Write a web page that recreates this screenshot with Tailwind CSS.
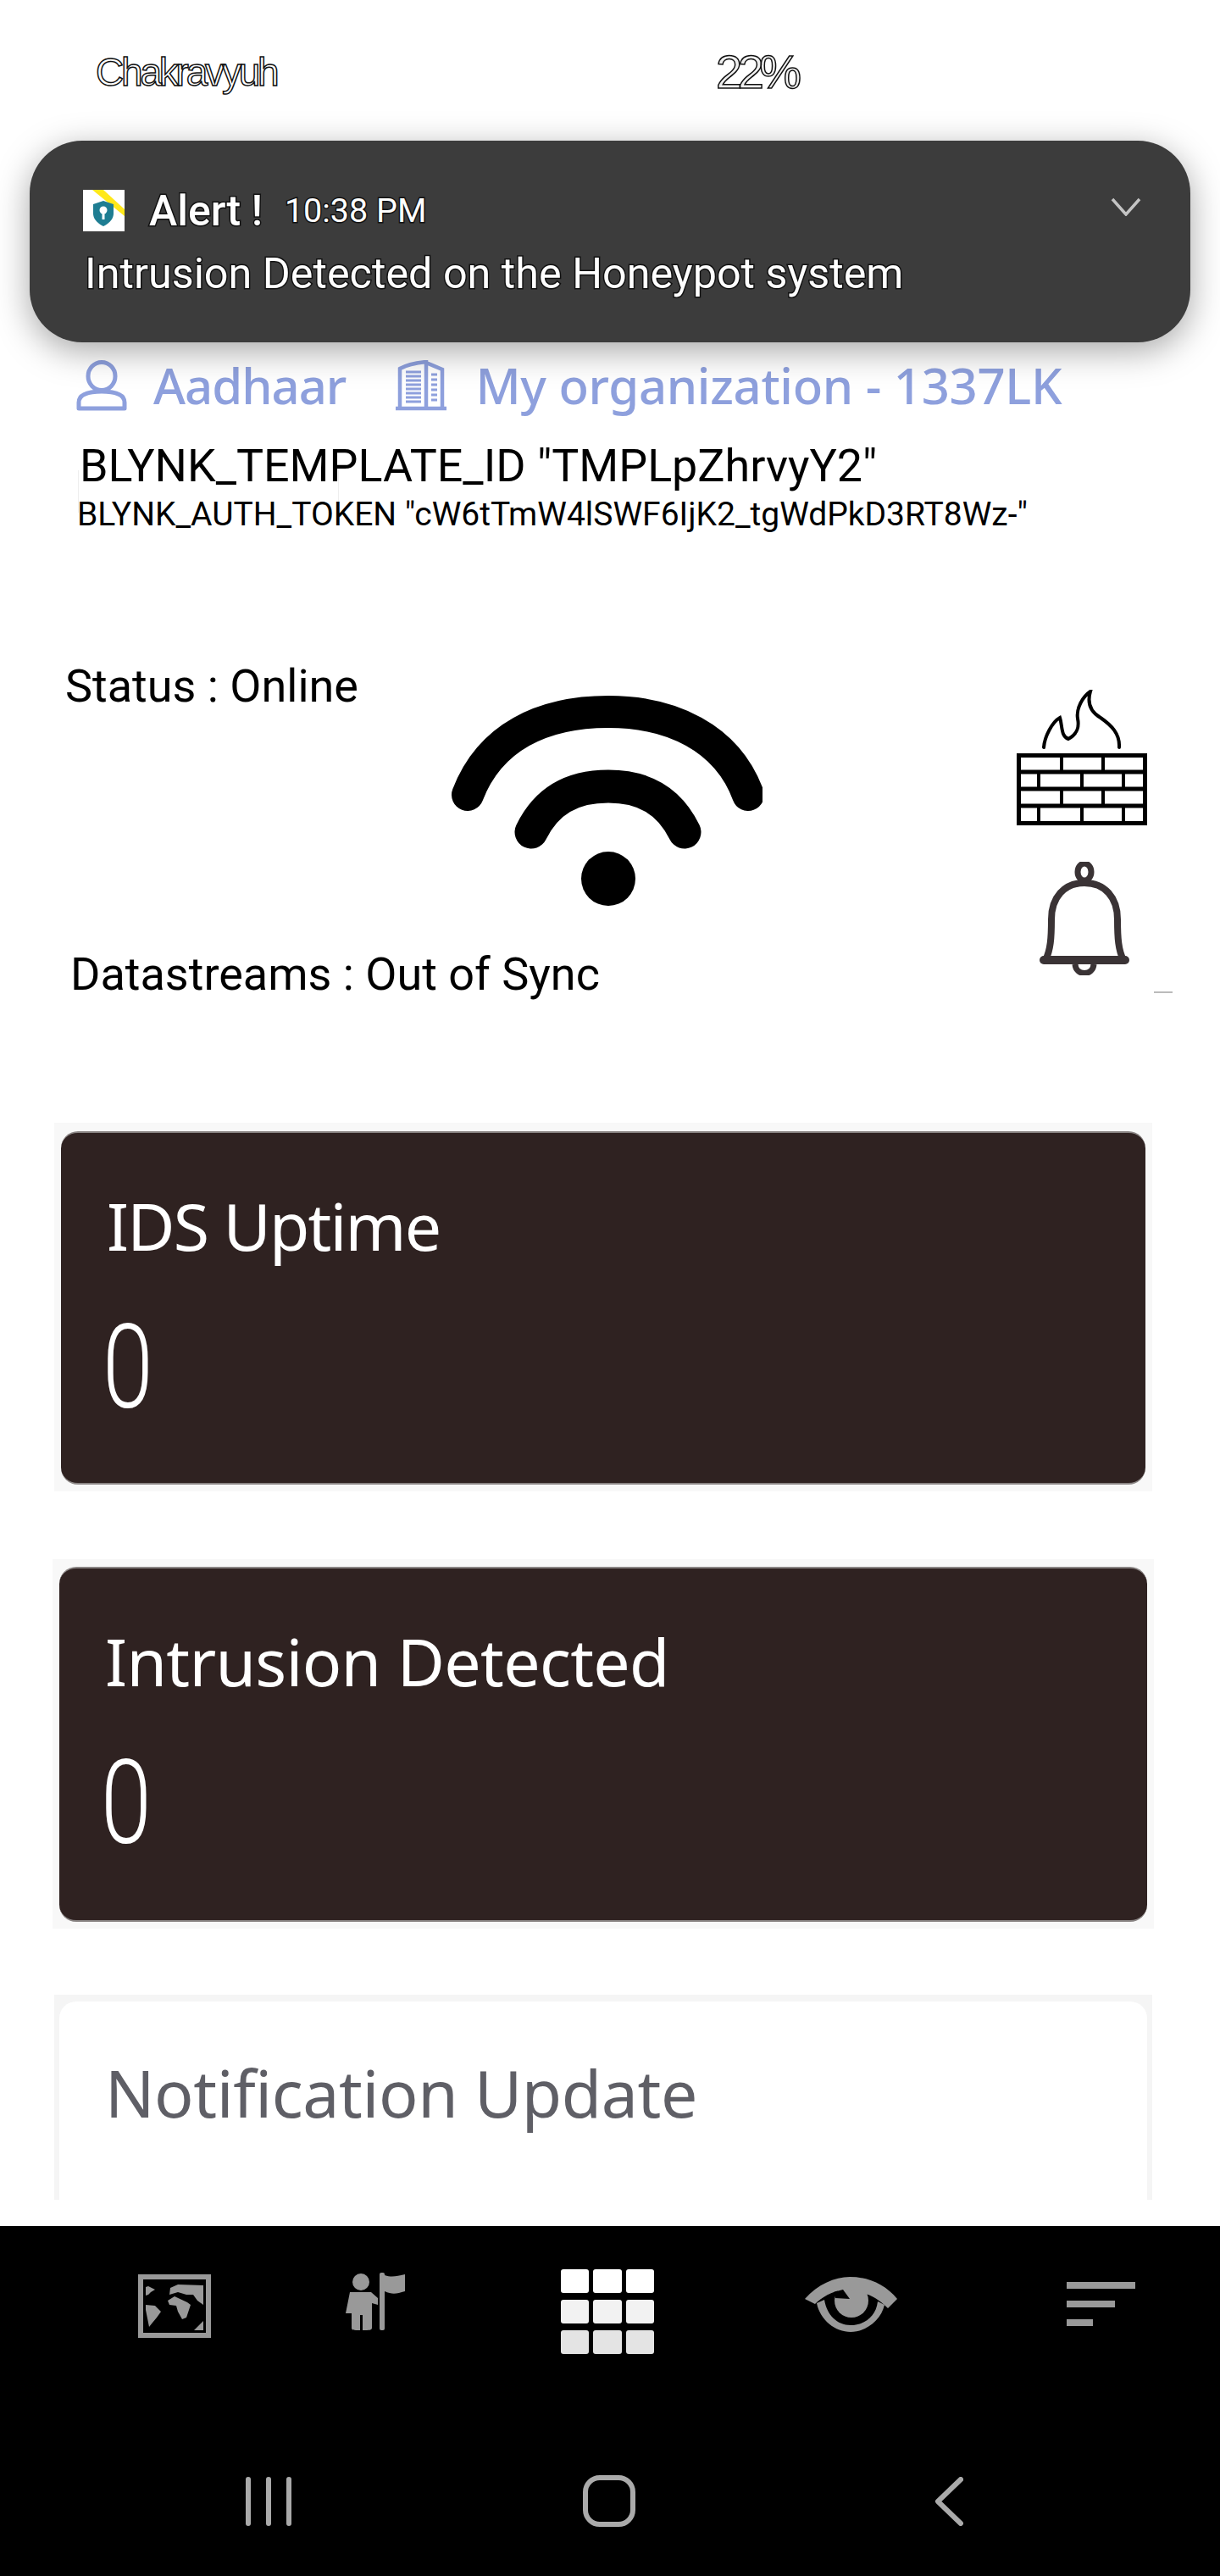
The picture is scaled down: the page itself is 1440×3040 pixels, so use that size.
<!DOCTYPE html>
<html>
  <head>
    <meta charset="UTF-8" />
    <title>Chakravyuh</title>
    <script src="https://cdn.jsdelivr.net/npm/@tailwindcss/browser@4"></script>
  </head>
  <body class="bg-white font-['Roboto',sans-serif]">
    <div class="relative w-[1440px] h-[3040px] flex flex-col overflow-hidden">

      <!-- status bar -->
      <div class="h-[166px] shrink-0 flex items-start pt-[60px] pl-[113px] font-['Liberation_Sans',sans-serif] text-white [-webkit-text-stroke:1.5px_#111]">
        <span class="w-[732px] text-[46px] leading-[50px] tracking-[-3.2px]">Chakravyuh</span>
        <span class="text-[56px] leading-[50px] tracking-[-5.5px] text-[#f0f0f0]">22%</span>
      </div>

      <!-- notification, sits over the page -->
      <div class="absolute z-10 left-[35px] top-[166px] w-[1370px] h-[238px] rounded-[62px] bg-[#3c3c3c] shadow-[0_10px_40px_rgba(0,0,0,0.35)] text-white">
        <div class="flex items-center pl-[63px] pt-[56px]">
          <svg class="w-[49px] h-[49px]" viewBox="0 0 49 49">
            <rect width="49" height="49" fill="#fff" />
            <path d="M11 0H24L49 23V31Z" fill="#ffe81a" />
            <path d="M24 13L36 17V28C36 35 30 40 24 43C18 40 12 35 12 28V17Z" fill="#1e7d92" />
            <circle cx="24" cy="24" r="4.5" fill="#fff" />
            <rect x="22.5" y="25" width="3" height="10" fill="#fff" />
          </svg>
          <span class="ml-[29px] mt-[2px] text-[50px] leading-[50px] font-medium [paint-order:stroke_fill] [-webkit-text-stroke:3px_#111]">Alert !</span>
          <span class="ml-[26px] mt-[2px] text-[39.5px] leading-[50px] [paint-order:stroke_fill] [-webkit-text-stroke:3px_#111]">10:38 PM</span>
          <svg class="ml-auto mr-[58px] -mt-[8px] w-[36px] h-[22px]" viewBox="0 0 36 22" fill="none" stroke="#c4c4c4" stroke-width="3.5">
            <path d="M2 2L18 20L34 2" />
          </svg>
        </div>
        <p class="ml-[65px] mt-[18px] text-[50.3px] leading-[62px] [paint-order:stroke_fill] [-webkit-text-stroke:3px_#111]">Intrusion Detected on the Honeypot system</p>
      </div>

      <!-- organization row -->
      <div class="mt-[257px] h-[64px] shrink-0 flex items-center pl-[90px] text-[#8ea0dd] font-['Noto_Sans',sans-serif] text-[58px] leading-[64px] font-medium blur-[0.6px]">
        <svg class="w-[60px] h-[60px]" viewBox="0 0 60 60" fill="none" stroke="#8ea0dd" stroke-width="5">
          <ellipse cx="30" cy="19" rx="16" ry="16.5" />
          <path d="M3 57V50C3 42 11 37 30 37C49 37 57 42 57 50V57Z" stroke-linejoin="round" />
        </svg>
        <span class="ml-[31px] tracking-[-1px]">Aadhaar</span>
        <svg class="ml-[59px] w-[60px] h-[60px]" viewBox="0 0 60 60" fill="none" stroke="#8ea0dd" stroke-width="4.5">
          <path d="M0 57H60M5 57V10C14 5 26 3 36 2V57M36 3L55 11V57" />
          <path d="M12 14H30M12 19H30M12 24H30M12 29H30M12 34H30M12 39H30M12 44H30M12 49H30M42 17H49M42 23H49M42 29H49M42 35H49M42 41H49M42 47H49" stroke-width="3" />
        </svg>
        <span class="ml-[34px] tracking-[-0.3px]">My organization - 1337LK</span>
      </div>

      <!-- template id / auth token -->
      <div class="relative h-[115px] shrink-0 mt-[32px] pl-[94px]">
        <div class="absolute left-[92px] top-[36px] w-[308px] h-[50px] border-x border-[#eeeeee]"></div>
        <p class="relative text-[53.8px] leading-[62px] whitespace-nowrap text-black">BLYNK_TEMPLATE_ID "TMPLpZhrvyY2"</p>
        <p class="relative -ml-[3px] text-[39px] leading-[52px] whitespace-nowrap text-black">BLYNK_AUTH_TOKEN "cW6tTmW4lSWF6IjK2_tgWdPkD3RT8Wz-"</p>
      </div>

      <!-- device status -->
      <div class="h-[400px] shrink-0 mt-[148px] flex text-[54px] leading-[60px] text-black">
        <div class="w-[530px] shrink-0 flex flex-col">
          <span class="ml-[77px] mt-[-2px]">Status : Online</span>
          <span class="ml-[83px] mt-[280px] whitespace-nowrap">Datastreams : Out of Sync</span>
        </div>
        <svg class="mt-[38px] w-[370px] h-[250px] shrink-0" viewBox="0 0 370 250" fill="none" stroke="#000" stroke-linecap="round">
          <path d="M22 118C48 50 110 20 188 20C262 20 328 50 353 118" stroke-width="38" />
          <path d="M97 162C115 125 145 108 188 108C230 108 260 125 278 162" stroke-width="39" />
          <ellipse cx="188" cy="217" rx="32" ry="32" fill="#000" stroke="none" />
        </svg>
        <div class="ml-[300px] flex flex-col w-[190px] shrink-0">
          <svg class="w-[156px] h-[160px] mt-[32px]" viewBox="0 0 156 160" fill="none" stroke="#000">
            <path d="M32 68C33 55 42 38 51 33C54 42 52 55 61 58C72 52 74 44 72 34C70 22 78 8 87 2C84 12 84 24 99 33C112 42 122 52 121 68" stroke-width="4" stroke-linecap="round" />
            <rect x="2.5" y="77.5" width="149" height="80" stroke-width="5" />
            <path d="M2 97H152M2 117H152M2 137H152" stroke-width="5" />
            <path d="M53 77V97M102 77V97M26 97V117M77 97V117M126 97V117M53 117V137M102 117V137M26 137V157M77 137V157M126 137V157" stroke-width="4" />
          </svg>
          <svg class="ml-[26px] mt-[43px] w-[108px] h-[134px]" viewBox="0 0 108 134" fill="none" stroke="#3a3335">
            <ellipse cx="54" cy="12" rx="8" ry="10" stroke-width="7" />
            <path d="M8 116C14 104 15 90 15 68C15 42 30 25 54 25C78 25 93 42 93 68C93 90 94 104 100 116" stroke-width="8" />
            <path d="M6 116H102" stroke-width="10" stroke-linecap="round" />
            <path d="M43 121C44 135 64 135 65 121" stroke-width="7" />
          </svg>
          <div class="ml-[162px] mt-[19px] w-[22px] h-[2px] bg-[#bbbbbb]"></div>
        </div>
      </div>

      <!-- cards, cut off by the scroll area -->
      <div class="h-[1414px] shrink-0 overflow-hidden pt-[143px] flex flex-col font-['Noto_Sans',sans-serif]">
        <div class="ml-[64px] w-[1296px] h-[435px] shrink-0 bg-[#f8f8f8] pt-[10px] px-[8px]">
          <div class="h-[417px] rounded-[20px] bg-[#2f2221] border-t-2 border-b-2 border-[#8a8584] pl-[54px] pt-[70px] text-white">
            <p class="text-[77px] leading-[80px] tracking-[-1.8px]">IDS Uptime</p>
            <p class="-ml-[5px] mt-[62px] font-['Roboto'] font-light text-[138px] leading-[130px] origin-left scale-x-[0.78]">0</p>
          </div>
        </div>
        <div class="ml-[62px] mt-[80px] w-[1300px] h-[436px] shrink-0 bg-[#f8f8f8] pt-[9px] px-[8px]">
          <div class="h-[419px] rounded-[20px] bg-[#2f2221] border-t-2 border-b-2 border-[#8a8584] pl-[54px] pt-[70px] text-white">
            <p class="text-[77px] leading-[80px] tracking-[-0.7px]">Intrusion Detected</p>
            <p class="-ml-[5px] mt-[62px] font-['Roboto'] font-light text-[138px] leading-[130px] origin-left scale-x-[0.78]">0</p>
          </div>
        </div>
        <div class="ml-[64px] mt-[78px] w-[1296px] h-[400px] shrink-0 bg-[#f5f5f5] pt-[8px] px-[6px]">
          <div class="h-[392px] rounded-[20px] bg-white pl-[54px] pt-[68px]">
            <p class="text-[77px] leading-[80px] tracking-[-0.4px] text-[#5f5f66]">Notification Update</p>
          </div>
        </div>
      </div>

      <!-- bottom tabs and system navigation -->
      <div class="mt-[31px] flex-1 bg-black">
        <div class="h-[296px] flex items-start pl-[163px]">
          <svg class="mt-[57px] w-[86px] h-[75px] shrink-0" viewBox="0 0 86 75" fill="#999">
            <rect x="3" y="3" width="80" height="69" fill="none" stroke="#999" stroke-width="6" />
            <path d="M9 15L12 14L20 18L15 21L12 24L9 25Z" />
            <path d="M9 36L20 37L27 44L22 51L17 57L13 62L11 52L9 42Z" />
            <path d="M38 16L47 12L77 13V36L70 31L65 24L57 24L47 21L37 24Z" />
            <path d="M35 31L43 26L58 33L62 36L57 51L52 53L47 44L45 37L37 36Z" />
            <path d="M66 66L77 55V66Z" />
          </svg>
          <svg class="ml-[159px] mt-[55px] w-[71px] h-[70px] shrink-0" viewBox="0 0 71 70" fill="#999">
            <circle cx="18" cy="11" r="10" />
            <path d="M5 23H30L38 30V38L31 36V65C31 68 28 68 20 68V50H17V68C9 68 7 68 7 65V48H0Z" />
            <rect x="40" y="0" width="6" height="68" rx="2" />
            <path d="M46 3C55 6 60 4 70 2V22C60 25 55 26 46 22Z" />
          </svg>
          <div class="ml-[183px] mt-[51px] w-[110px] grid grid-cols-3 gap-x-[5px] gap-y-[8px] shrink-0 blur-[0.5px]">
            <div class="h-[28px] rounded-[3px] bg-white"></div>
            <div class="h-[28px] rounded-[3px] bg-white"></div>
            <div class="h-[28px] rounded-[3px] bg-white"></div>
            <div class="h-[28px] rounded-[3px] bg-[#f2f2f2]"></div>
            <div class="h-[28px] rounded-[3px] bg-[#f2f2f2]"></div>
            <div class="h-[28px] rounded-[3px] bg-[#f2f2f2]"></div>
            <div class="h-[28px] rounded-[3px] bg-[#e4e4e4]"></div>
            <div class="h-[28px] rounded-[3px] bg-[#e4e4e4]"></div>
            <div class="h-[28px] rounded-[3px] bg-[#e4e4e4]"></div>
          </div>
          <svg class="ml-[178px] mt-[59px] w-[110px] h-[66px] shrink-0" viewBox="0 0 110 66" fill="#999">
            <circle cx="55" cy="29" r="20" />
            <path d="M0 27C15 10 35 1 53 1C75 1 95 10 109 27L98 38C88 28 78 22 68 20L45 16C32 18 20 25 12 33Z" />
            <path d="M45 16L53 27L36 26L34 19Z" fill="#000" />
            <path d="M14 32C18 52 36 66 54 66C72 66 90 52 94 34L86 30C84 48 70 58 54 58C38 58 26 46 23 28Z" />
          </svg>
          <div class="ml-[199px] mt-[66px] flex flex-col gap-[14px] shrink-0">
            <div class="w-[81px] h-[8px] bg-[#999999]"></div>
            <div class="w-[57px] h-[8px] bg-[#999999]"></div>
            <div class="w-[31px] h-[8px] bg-[#999999]"></div>
          </div>
        </div>
        <div class="flex items-start pl-[290px]">
          <div class="w-[54px] h-[58px] flex justify-between shrink-0">
            <div class="w-[6px] rounded-full bg-[#aaaaaa]"></div>
            <div class="w-[6px] rounded-full bg-[#aaaaaa]"></div>
            <div class="w-[6px] rounded-full bg-[#aaaaaa]"></div>
          </div>
          <div class="ml-[344px] -mt-[2px] w-[62px] h-[61px] rounded-[20px] border-[6px] border-[#aaaaaa] shrink-0"></div>
          <svg class="ml-[353px] w-[34px] h-[58px] shrink-0" viewBox="0 0 34 58" fill="none" stroke="#aaa" stroke-width="6" stroke-linecap="round" stroke-linejoin="round">
            <path d="M31 3L4 29L31 55" />
          </svg>
        </div>
      </div>
    </div>
  </body>
</html>
